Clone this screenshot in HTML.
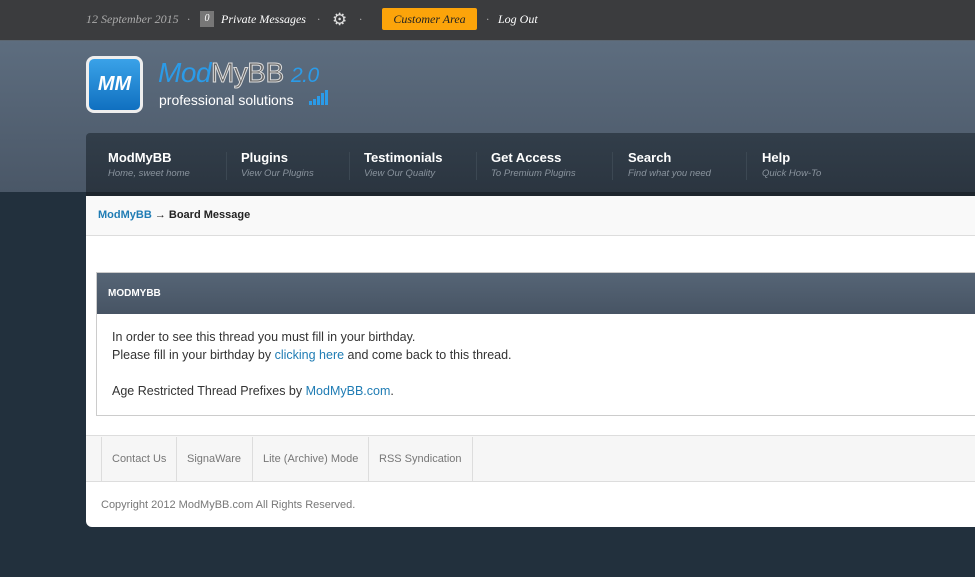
<!DOCTYPE html>
<html><head><style>
*{margin:0;padding:0;box-sizing:border-box}
body{width:975px;height:577px;overflow:hidden;background:#22303d;font-family:"Liberation Sans",sans-serif;position:relative}
.top{position:absolute;left:0;top:0;width:975px;height:41px;background:#3b3c3e;border-bottom:1px solid #5c6670;font-family:"Liberation Serif",serif;font-style:italic;font-size:12px;color:#fff}
.top span{position:absolute;top:12px}
.hdr{position:absolute;left:0;top:41px;width:975px;height:151px;background:linear-gradient(#5d6d7f,#4a5767)}
.nav{position:absolute;left:86px;top:133px;width:889px;height:63px;background:linear-gradient(#323e4a,#2b3540);border-radius:4px 0 0 0;border-bottom:4px solid #1d252d}
.nav div{position:absolute;top:17px;color:#fff;font-weight:bold;font-size:13px}
.nav div i{display:block;font-weight:normal;font-size:9.5px;color:#8a949e;margin-top:3px}
.sep{position:absolute;top:19px;width:1px;height:28px;background:#222b33;border-right:1px solid #3c4853}
.main{position:absolute;left:86px;top:196px;width:889px;height:331px;background:#fff;border-radius:0 0 0 6px;overflow:hidden}
.bc{height:40px;background:#f9f9f9;border-bottom:1px solid #ddd;font-size:11px;font-weight:bold;padding:13px 12px;color:#222}
.tb{position:absolute;left:10px;top:76px;width:879px;height:144px;border:1px solid #ccc;border-right:none}
.th{height:41px;background:linear-gradient(#566576,#475464);color:#fff;font-size:10px;font-weight:bold;padding:15px 11px}
.td{padding:14px 15px;font-size:12.5px;color:#333;line-height:18px}
a{color:#1f7cb4;text-decoration:none}
.fl{position:absolute;left:0;top:239px;width:889px;height:47px;background:#f6f6f6;border-top:1px solid #ddd;border-bottom:1px solid #ddd}
.fl span{position:absolute;top:1px;height:45px;line-height:45px;font-size:11px;color:#777;border-left:1px solid #ddd;padding:0 10px}
.cp{position:absolute;left:15px;top:303px;font-size:11px;color:#777}
.bars{position:absolute;left:309px;top:49px;width:20px;height:15px}
.bars b{position:absolute;bottom:0;width:3px;background:#2b9be8}
</style></head><body>
<div class="top">
<span style="left:86px;color:#aaa">12 September 2015</span>
<span style="left:187px;color:#aaa">·</span>
<span style="left:200px;top:11px;width:14px;height:16px;background:#777;color:#fff;text-align:center;line-height:16px;font-size:10px">0</span>
<span style="left:221px">Private Messages</span>
<span style="left:317px;color:#aaa">·</span>
<span style="left:332px;top:10px;font-style:normal;font-size:17px;color:#ddd">⚙</span>
<span style="left:359px;color:#aaa">·</span>
<span style="left:382px;top:8px;width:95px;height:22px;background:#fca40a;color:#222;text-align:center;line-height:22px;border-radius:2px">Customer Area</span>
<span style="left:486px;color:#aaa">·</span>
<span style="left:498px">Log Out</span>
</div>
<div class="hdr">
<div style="position:absolute;left:86px;top:15px;width:57px;height:57px;border-radius:8px;background:#eee;padding:3px"><div style="width:51px;height:51px;border-radius:5px;background:linear-gradient(#3aa2e8,#1070c0);color:#fff;font-style:italic;font-weight:bold;font-size:20px;text-align:center;line-height:51px">MM</div></div>
<div style="position:absolute;left:158px;top:16px;font-style:italic;font-size:28px;color:#2b9be8;letter-spacing:-0.5px">Mod<span style="font-style:normal;color:#666;-webkit-text-stroke:1px #ddd">MyBB</span> <span style="font-size:21px">2.0</span></div>
<div style="position:absolute;left:159px;top:51px;font-size:14px;color:#fff">professional solutions</div>
<div class="bars"><b style="left:0;height:4px"></b><b style="left:4px;height:6px"></b><b style="left:8px;height:9px"></b><b style="left:12px;height:12px"></b><b style="left:16px;height:15px"></b></div>
</div>
<div class="nav">
<div style="left:22px">ModMyBB<i>Home, sweet home</i></div><span class="sep" style="left:140px"></span>
<div style="left:155px">Plugins<i>View Our Plugins</i></div><span class="sep" style="left:263px"></span>
<div style="left:278px">Testimonials<i>View Our Quality</i></div><span class="sep" style="left:390px"></span>
<div style="left:405px">Get Access<i>To Premium Plugins</i></div><span class="sep" style="left:526px"></span>
<div style="left:542px">Search<i>Find what you need</i></div><span class="sep" style="left:660px"></span>
<div style="left:676px">Help<i>Quick How-To</i></div>
</div>
<div class="main">
<div class="bc"><a>ModMyBB</a> → Board Message</div>
<div class="tb"><div class="th">MODMYBB</div>
<div class="td">In order to see this thread you must fill in your birthday.<br>Please fill in your birthday by <a>clicking here</a> and come back to this thread.<br><br>Age Restricted Thread Prefixes by <a>ModMyBB.com</a>.</div></div>
<div class="fl"><span style="left:15px">Contact Us</span><span style="left:90px">SignaWare</span><span style="left:166px">Lite (Archive) Mode</span><span style="left:282px;border-right:1px solid #ddd">RSS Syndication</span></div>
<div class="cp">Copyright 2012 ModMyBB.com All Rights Reserved.</div>
</div>
</body></html>
